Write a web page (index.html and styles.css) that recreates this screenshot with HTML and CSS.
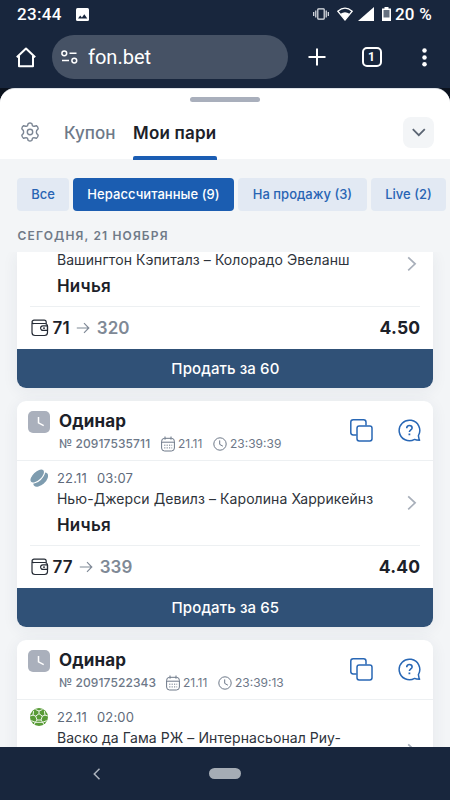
FILE: index.html
```html
<!DOCTYPE html>
<html lang="ru">
<head>
<meta charset="utf-8">
<title>Мои пари</title>
<link rel="stylesheet" href="styles.css">
</head>
<body>
<svg class="defs" width="0" height="0">
  <symbol id="wallet" viewBox="0 0 18 18"><g fill="none" stroke="#252b35" stroke-width="1.2" stroke-linejoin="round"><path d="M1 4v9.500a3 3 0 0 0 3 3h9.500a3 3 0 0 0 3-3V7.500a3 3 0 0 0-3-3H3.200A2 2 0 0 1 1 3.200 2 2 0 0 1 3.200 1.200h10a2 2 0 0 1 2 2v1.500"/><path d="M16.500 6.800h-4.600a2.300 2.300 0 0 0 0 4.600h4.600z"/><path d="M12 9.100h2"/></g></symbol>
  <symbol id="arrow" viewBox="0 0 14 12"><path d="M.8 6h12M8 1.200 12.800 6 8 10.800" fill="none" stroke="#7f8996" stroke-width="1.150"/></symbol>
  <symbol id="chev" viewBox="0 0 10 16"><path d="m1.200 1.300 6.900 6.500-6.900 6.500" fill="none" stroke="#a8afba" stroke-width="1.700"/></symbol>
  <symbol id="cal" viewBox="0 0 14 16"><g fill="none" stroke="#6d7888"><rect x=".6" y="2.300" width="12.800" height="12.700" rx="3"/><path d="M.6 6.200h12.800M4 .5v3.200M10 .5v3.200"/><path d="M3.200 9.200h8M3.200 11.900h8" stroke-dasharray="1.200 1.200"/></g></symbol>
  <symbol id="clock" viewBox="0 0 14 14"><g fill="none" stroke="#6d7888"><circle cx="7" cy="7" r="6.200"/><path d="M6.700 3.400v4l3.200 1.800"/></g></symbol>
  <symbol id="copy" viewBox="0 0 23 23"><g fill="none" stroke="#2867b5" stroke-width="1.500"><path d="M6.600 16H3.200A2.400 2.400 0 0 1 .8 13.600V3.200A2.400 2.400 0 0 1 3.200.8h10.400A2.400 2.400 0 0 1 16 3.200v3.400"/><rect x="7" y="7" width="15" height="15" rx="2.200"/></g></symbol>
  <symbol id="help" viewBox="0 0 23 23"><g fill="none" stroke="#2867b5" stroke-width="1.500"><path d="M20.400 16.600A10.300 10.300 0 1 0 16.600 20.400c1.300.8 3 .9 5 .9-.6-.8-.9-2.800-1.200-4.700z" stroke-linejoin="round"/><path d="M8.700 9.200c0-1.700 1.100-2.700 2.700-2.700s2.700 1 2.700 2.400c0 2-2.700 2-2.700 4.200" stroke-width="1.600"/><path d="M10.500 15.400h1.800" stroke-width="1.800"/></g></symbol>
  <symbol id="badge" viewBox="0 0 22 22"><rect width="22" height="22" rx="5" fill="#aab0bc"/><path d="M10.500 6v5.800l5.200 2.800" fill="none" stroke="#fff" stroke-width="1.500"/></symbol>
</svg>
<div class="screen">
  <header class="status">
    <span class="status-time">23:44</span>
    <svg class="pic" width="13" height="13" viewBox="0 0 13 13"><rect width="13" height="13" rx="1.500" fill="#fff"/><path d="M2 10.500 4.200 7.400l1.700 2 2.400-3.200 3 4.300z" fill="#18263d"/></svg>
    <span class="grow"></span>
    <svg width="16" height="12" viewBox="0 0 16 12"><g fill="none" stroke="#e4e7ec" stroke-width="1.200"><rect x="4.800" y=".8" width="6.400" height="10.400" rx=".8"/><path d="M2.800 2.500v7M.7 4v4M13.200 2.500v7M15.300 4v4"/></g></svg>
    <svg class="wifi" width="16" height="14" viewBox="0 0 16 14"><path d="M.8 4.200Q8-2 15.200 4.200L8 13z" fill="none" stroke="#fff" stroke-width="1.300"/><path d="M3.500 6.800q4.500-3 9 0L8 13z" fill="#fff"/></svg>
    <svg class="cell" width="16" height="14" viewBox="0 0 16 14"><path d="M16 0v14H0z" fill="#fff"/></svg>
    <svg class="batt" width="9" height="14" viewBox="0 0 9 14"><path d="M2.500 0h4v1.500H9V14H0V1.500h2.500z" fill="#fff"/><path d="M1.500 3h6v7.500h-6z" fill="#657080"/></svg>
    <span class="status-batt">20 %</span>
  </header>
  <nav class="browser">
    <svg class="home" width="20" height="21" viewBox="0 0 20 21"><path d="M.8 10.300 10 1.500l9.200 8.800M3 9v10.300h14V9" fill="none" stroke="#fff" stroke-width="2" stroke-linejoin="round"/></svg>
    <div class="url">
      <svg width="17" height="14" viewBox="0 0 17 14"><g fill="none" stroke="#fff" stroke-width="1.500"><circle cx="3.300" cy="3.300" r="2.400"/><path d="M8.500 3.300h7M1 10.600h7"/><circle cx="13.300" cy="10.600" r="2.400"/></g></svg>
      <span>fon.bet</span>
    </div>
    <svg class="plus" width="18" height="18" viewBox="0 0 18 18"><path d="M9 .5v17M.5 9h17" stroke="#fff" stroke-width="2"/></svg>
    <div class="count">1</div>
    <svg class="dots" width="5" height="19" viewBox="0 0 5 19"><g fill="#fff"><circle cx="2.500" cy="2.600" r="2.250"/><circle cx="2.500" cy="9.500" r="2.250"/><circle cx="2.500" cy="16.300" r="2.250"/></g></svg>
  </nav>
  <main class="backdrop">
    <section class="sheet">
      <div class="handle"></div>
      <div class="tabs">
        <svg class="gear" width="20" height="20" viewBox="0 0 20 20"><g fill="none" stroke="#7c8694" stroke-width="1.400" stroke-linejoin="round"><path d="M8.200 1.500q1.800-1 3.600 0l.7 2.200q.8.800 1.800.5l2.100-.5q1.600 1 1.800 3l-1.500 1.800q-.6 1.500 0 3l1.500 1.800q-.2 2-1.800 3l-2.100-.5q-1-.3-1.800.5l-.7 2.200q-1.800 1-3.600 0l-.7-2.200q-.8-.8-1.800-.5l-2.100.5q-1.600-1-1.800-3l1.500-1.800q.6-1.500 0-3L1.800 6.700q.2-2 1.800-3l2.100.5q1 .3 1.800-.5z"/><circle cx="10" cy="10" r="2.700"/></g></svg>
        <span class="tab tab-coupon">Купон</span>
        <span class="tab active">Мои пари</span>
        <span class="grow"></span>
        <div class="collapse"><svg width="14" height="9" viewBox="0 0 14 9"><path d="m.8 1.200 6 6 6-6" fill="none" stroke="#5b6573" stroke-width="1.800"/></svg></div>
      </div>
      <div class="filters">
        <span class="chip c1">Все</span><span class="chip c2 on">Нерассчитанные (9)</span><span class="chip c3">На продажу (3)</span><span class="chip c4">Live (2)</span>
      </div>
      <h2 class="date"><span>СЕГОДНЯ, 21 НОЯБРЯ</span></h2>
      <div class="list">
        <article class="card first">
          <div class="event">
            <div class="teams"><span>Вашингтон Кэпиталз – Колорадо Эвеланш</span></div>
            <div class="pick">Ничья</div>
            <svg class="go" width="10" height="16"><use href="#chev"/></svg>
          </div>
          <div class="sum"><svg width="18" height="18"><use href="#wallet"/></svg><b class="stake">71</b><svg class="arr" width="14" height="12"><use href="#arrow"/></svg><b class="win">320</b><b class="odds">4.50</b></div>
          <div class="sell"><span>Продать за 60</span></div>
        </article>
        <article class="card">
          <div class="head">
            <svg class="badge" width="22" height="22"><use href="#badge"/></svg>
            <div class="info"><div class="kind">Одинар</div><div class="meta"><span class="id id1">№ 20917535711</span><svg width="14" height="16"><use href="#cal"/></svg><span class="day">21.11</span><svg width="14" height="14"><use href="#clock"/></svg><span class="hour">23:39:39</span></div></div>
            <svg class="copy" width="23" height="23"><use href="#copy"/></svg>
            <svg width="23" height="23"><use href="#help"/></svg>
          </div>
          <div class="event">
            <div class="when"><svg width="18" height="18" viewBox="0 0 18 18"><ellipse cx="10.700" cy="10.700" rx="9" ry="4.900" transform="rotate(-43 10.700 10.700)" fill="#7e9caf"/><ellipse cx="7.200" cy="7" rx="9" ry="4.700" transform="rotate(-43 7.200 7)" fill="#7e9caf" stroke="#fff" stroke-width="1.200"/></svg><span class="d">22.11</span><span>03:07</span></div>
            <div class="teams"><span>Нью-Джерси Девилз – Каролина Харрикейнз</span></div>
            <div class="pick">Ничья</div>
            <svg class="go" width="10" height="16"><use href="#chev"/></svg>
          </div>
          <div class="sum"><svg width="18" height="18"><use href="#wallet"/></svg><b class="stake">77</b><svg class="arr" width="14" height="12"><use href="#arrow"/></svg><b class="win">339</b><b class="odds">4.40</b></div>
          <div class="sell"><span>Продать за 65</span></div>
        </article>
        <article class="card">
          <div class="head">
            <svg class="badge" width="22" height="22"><use href="#badge"/></svg>
            <div class="info"><div class="kind">Одинар</div><div class="meta"><span class="id id2">№ 20917522343</span><svg width="14" height="16"><use href="#cal"/></svg><span class="day">21.11</span><svg width="14" height="14"><use href="#clock"/></svg><span class="hour">23:39:13</span></div></div>
            <svg class="copy" width="23" height="23"><use href="#copy"/></svg>
            <svg width="23" height="23"><use href="#help"/></svg>
          </div>
          <div class="event">
            <div class="when"><svg width="18" height="18" viewBox="0 0 18 18"><circle cx="9" cy="9" r="9" fill="#589b36"/><path d="m9 5.700 3.300 2.400-1.300 3.900H7L5.700 8.100zM9 5.700V3M12.300 8.100l2.700-1M11 12l1.700 2.300M7 12l-1.700 2.300M5.700 8.100 3 7.100M5.500 1.500 9 3l3.500-1.500M17.800 8 15 7.100l-.6-4M13.800 16.500l-1.100-2.200 4-1.700M4.200 16.500l1.100-2.200-4-1.700M.2 8 3 7.100l.6-4M5.300 14.300h7.400" fill="none" stroke="#fff" stroke-width=".9"/></svg><span class="d">22.11</span><span>02:00</span></div>
            <div class="teams"><span>Васко да Гама РЖ – Интернасьонал Риу-</span></div>
            <svg class="go last" width="10" height="16"><use href="#chev"/></svg>
          </div>
        </article>
      </div>
    </section>
  </main>
  <footer class="system"><svg width="8" height="12" viewBox="0 0 8 12"><path d="M6.500.8 1.300 6l5.200 5.200" fill="none" stroke="#adb4be" stroke-width="1.500"/></svg><span class="pill"></span></footer>
</div>
</body>
</html>
```
FILE: styles.css
```css
* { box-sizing: border-box; }
body { margin: 0; font-family: Inter, sans-serif; color: #1c2129; overflow: hidden; }
svg { display: block; flex: none; }
.defs { position: absolute; }
.grow { flex: 1; }
.screen { width: 450px; height: 800px; display: flex; flex-direction: column; background: #18263d; overflow: hidden; }
.status { height: 28px; flex: none; display: flex; align-items: center; padding: 0 17px; color: #fff; font: 500 17px/28px Roboto, sans-serif; }
.status-time { width: 59px; letter-spacing: .3px; }
.wifi { margin-left: 8px; }
.cell { margin-left: 5px; }
.batt { margin-left: 8px; }
.status-batt { width: 38px; margin-left: 4px; white-space: nowrap; letter-spacing: .2px; }
.browser { height: 60px; flex: none; display: flex; align-items: center; padding-left: 16px; padding-bottom: 2px; }
.url { width: 236px; height: 44px; margin-left: 16px; border-radius: 22px; background: #465265; display: flex; align-items: center; padding-left: 9px; gap: 10px; color: #fff; font: 20px/44px Roboto, sans-serif; }
.plus { margin-left: 19.500px; }
.count { width: 20px; height: 20px; margin-left: 36px; border: 2px solid #fff; border-radius: 5px; color: #fff; font: 700 12px/16px Roboto, sans-serif; text-align: center; }
.dots { margin-left: 40px; }
.backdrop { flex: 1; min-height: 0; background: #0b121e; }
.sheet { height: 659px; display: flex; flex-direction: column; border-radius: 15px 15px 0 0; border-top: 1px solid #dfe3e8; background: #f3f5f7; overflow: hidden; }
.handle { height: 13px; flex: none; background: #fff; }
.handle::after { content: ""; display: block; width: 70px; height: 5px; margin: 0 auto; border-radius: 3px; background: #a9afbc; transform: translateY(8px); }
.tabs { height: 57px; flex: none; display: flex; align-items: center; background: #fff; padding: 4px 16px 0 20px; }
.gear { margin-top: -1px; }
.tab { height: 53px; font-size: 17px; line-height: 53px; white-space: nowrap; }
.tab-coupon { width: 51px; margin-left: 24px; line-height: 54px; font-weight: 500; color: #6e7988; }
.active { width: 84px; height: 57px; margin: -1px 0 0 18px; line-height: 59px; font-weight: 600; letter-spacing: .2px; position: relative; }
.active::after { content: ""; position: absolute; left: 0; right: 0; bottom: 1px; height: 4px; border-radius: 2px 2px 0 0; background: #1b5db3; }
.collapse { width: 31px; height: 31px; margin-top: -1px; border-radius: 8px; background: #f3f5f7; display: grid; place-items: center; }
.filters { height: 52px; flex: none; padding: 19px 0 0 17px; display: flex; gap: 4px; }
.chip { height: 33px; flex: none; border-radius: 4px; background: #e2e9f3; color: #2864b3; font-size: 13px; font-weight: 500; line-height: 33px; text-align: center; white-space: nowrap; }
.c1 { width: 52px; }
.c2 { width: 161px; letter-spacing: .05px; }
.c3 { width: 129px; }
.c4 { width: 75px; }
.on { background: #1b5db1; color: #fff; }
.date { height: 41px; flex: none; margin: 0; padding-left: 17.500px; font-size: 12px; line-height: 50px; font-weight: 600; letter-spacing: 1.150px; color: #707a88; }
.list { flex: 1; min-height: 0; overflow: hidden; padding: 0 16.600px 0 17.400px; }
.card { border-radius: 9px; background: #fff; box-shadow: 0 3px 16px rgba(38, 50, 80, .07); margin-bottom: 13px; overflow: hidden; }
.first { border-radius: 0 0 9px 9px; }
.head { height: 60px; display: flex; padding: 0 12px 0 10.600px; border-bottom: 1px solid #edf0f2; }
.badge { margin-top: 10px; }
.info { flex: 1; margin-left: 9px; }
.kind { height: 33px; font-size: 17px; font-weight: 700; line-height: 41px; letter-spacing: .15px; }
.meta { height: 20px; display: flex; align-items: center; font-size: 12px; line-height: 20px; color: #6d7888; white-space: nowrap; }
.id { font-weight: 500; letter-spacing: .1px; }
.id1 { width: 102px; }
.id2 { width: 107px; }
.day { width: 35px; margin-left: 3px; }
.hour { margin-left: 3px; }
.copy { margin-right: 25px; }
.head > .copy, .head > .copy + svg { margin-top: 18px; }
.event { position: relative; height: 85px; margin: 0 13px; border-bottom: 1px solid #edf0f2; }
.first .event { height: 55px; }
.when { display: flex; height: 27px; align-items: center; padding-top: 6px; font-size: 13px; line-height: 20px; color: #5f6b7b; letter-spacing: .2px; }
.when svg { margin: 0 9px 0 0; }
.when svg + .d { margin-left: -.5px; }
.d { width: 40px; }
.teams { height: 22px; padding-left: 26.500px; font-size: 14px; line-height: 22px; letter-spacing: .08px; color: #2e333b; white-space: nowrap; }
.first .teams { height: 19px; line-height: 16px; }
.pick { padding-left: 26.500px; font-size: 17px; line-height: 31px; font-weight: 600; letter-spacing: .3px; }
.go { position: absolute; right: 3.500px; top: 34px; }
.first .go { top: 4px; }
.go.last { top: 43px; }
.sum { height: 42px; display: flex; align-items: center; padding: 0 13px 0 13.700px; font-size: 17px; line-height: 42px; }
.sum b { font-weight: 600; letter-spacing: .1px; }
.stake { margin-left: 3.500px; }
.arr { margin: 0 6.500px; }
.sum .win { color: #7f8996; }
.sum .odds { margin-left: auto; font-weight: 700; font-size: 17.500px; letter-spacing: .25px; }
.sell { height: 39px; background: #305177; color: #fff; font-size: 15px; line-height: 39px; font-weight: 500; text-align: center; letter-spacing: .1px; }
.system { height: 53px; flex: none; display: flex; align-items: center; padding-left: 93px; }
.pill { width: 32px; height: 11px; margin-left: 108px; border-radius: 6px; background: #a5acb5; }
```
